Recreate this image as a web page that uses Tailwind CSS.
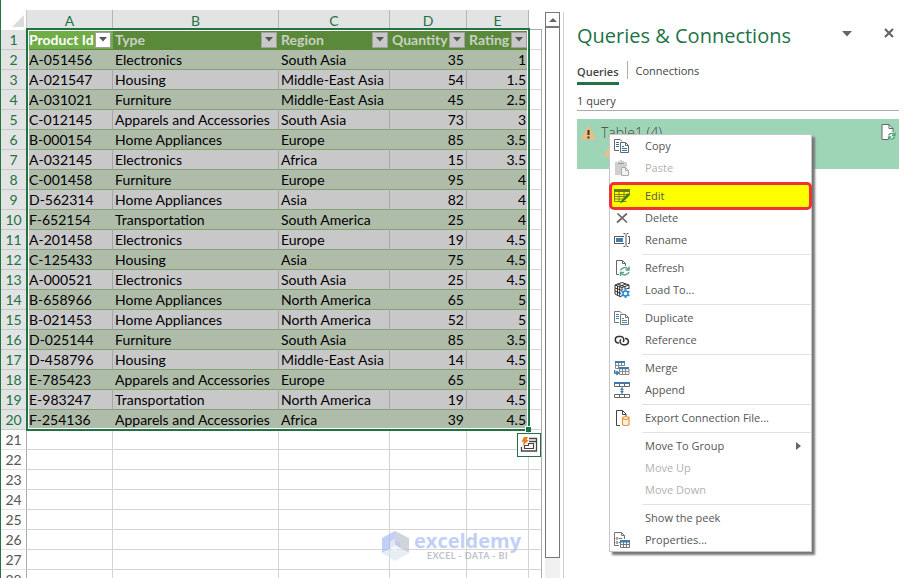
<!DOCTYPE html>
<html lang="en">
<head>
    <meta charset="UTF-8">
    <meta name="viewport" content="width=device-width, initial-scale=1.0">
    <title>Queries & Connections</title>
    <script src="https://cdn.jsdelivr.net/npm/@tailwindcss/browser@4"></script>
</head>
<body class="bg-white font-['Open_Sans',sans-serif]">
    <div class="flex h-screen overflow-hidden">

        <!-- Worksheet -->
        <main class="relative shrink-0 overflow-hidden border-l border-[#217346] pt-[10px] font-['Lato',sans-serif]">
            <table class="table-fixed w-[541px] border-separate border-spacing-0 text-[14px] leading-[19px] text-black">
                <colgroup>
                    <col class="w-[26px]"><col class="w-[86px]"><col class="w-[166px]"><col class="w-[111px]"><col class="w-[77px]"><col class="w-[62px]"><col class="w-[13px]">
                </colgroup>
                <thead>
                    <tr class="h-5 text-[#217346]">
                        <td class="border-r border-[#c6c6c6] p-0">
                            <svg class="ml-auto mr-[2px] mt-[2px]" width="12" height="12" viewBox="0 0 12 12"><path d="M12 0v12H0z" fill="#dcdcdc"/></svg>
                        </td>
                        <th class="border-r border-[#b5b5b5] bg-[#e1e4e2] p-0 font-normal">A</th>
                        <th class="border-r border-[#b5b5b5] bg-[#e1e4e2] p-0 font-normal">B</th>
                        <th class="border-r border-[#b5b5b5] bg-[#e1e4e2] p-0 font-normal">C</th>
                        <th class="border-r border-[#b5b5b5] bg-[#e1e4e2] p-0 font-normal">D</th>
                        <th class="border-r border-[#b5b5b5] bg-[#e1e4e2] p-0 font-normal">E</th>
                        <td class="border-b border-[#ababab] p-0"></td>
                    </tr>
                </thead>
                <tbody id="rows"></tbody>
            </table>

            <!-- Selection frame -->
            <div class="pointer-events-none absolute left-[25px] top-[28px] h-[403px] w-[504px] border-2 border-[#217346]">
                <div class="h-full border border-white"></div>
                <div class="absolute -bottom-[3px] -right-[3px] size-[6px] border-l border-t border-white bg-[#217346]"></div>
            </div>
            <button aria-label="Quick Analysis" class="absolute left-[516px] top-[433px] grid size-6 place-items-center border border-[#217346] bg-white">
                <svg width="18" height="18" viewBox="0 0 18 18" fill="none">
                    <path d="M9 2.500h7.500v12.500h-15V11M9 5.500h7" stroke="#444" stroke-width="1.300"/>
                    <path d="M4.500 12.500V9.500h4v-2h5v5z" stroke="#444" stroke-width="1.200"/>
                    <path d="M4 1h4L6.500 4H9L2.500 10l1.300-4.200H1.500z" fill="#ed7d1a"/>
                </svg>
            </button>

            <!-- Watermark -->
            <div class="pointer-events-none absolute left-[380px] top-[530px] flex items-center gap-1 opacity-70">
                <svg width="29" height="32" viewBox="0 0 29 32">
                    <path d="M14 1L1 8v15l8-4v-7l5-3z" fill="#a9bdf3"/>
                    <path d="M14 1l14 7v15l-9-5v-6l-5-3z" fill="#bdc4cf"/>
                    <path d="M1 23l13 8 14-8-9-5-5 3-5-2z" fill="#dbe8ef"/>
                    <path d="M14 9l-5 3v7l5-4z" fill="#d6dcec"/>
                    <path d="M14 9l5 3v6l-5-3z" fill="#a8b7e0"/>
                    <path d="M9 19l5-4 5 3-5 3z" fill="#eef2f8"/>
                </svg>
                <div class="text-center">
                    <div class="font-['Open_Sans',sans-serif] text-[20px] font-bold leading-[20px] text-[#a9bdf3]">exceldemy</div>
                    <div class="text-[9px] font-bold leading-[10px] tracking-wider text-[#a3a9b4]">EXCEL - DATA - BI</div>
                </div>
            </div>
        </main>

        <!-- Vertical scrollbar -->
        <div class="ml-[3px] mt-3 flex w-[15px] shrink-0 flex-col bg-[#f0f0f0]">
            <button aria-label="Scroll up" class="grid h-[15px] place-items-center border border-[#777] bg-white">
                <svg width="8" height="4" viewBox="0 0 8 4"><path d="M0 4l4-4 4 4z" fill="#666"/></svg>
            </button>
            <div class="mb-5 flex-1 border border-[#777] bg-white"></div>
        </div>

        <!-- Queries pane -->
        <aside class="relative ml-[3px] mt-3 min-w-0 flex-1 border-l border-[#d0d0d0] pl-[13px] pr-2 text-[#444]">
            <header class="flex items-start pt-[9px]">
                <h1 class="flex-1 whitespace-nowrap text-[20px] leading-[30px] text-[#217346]">Queries &amp; Connections</h1>
                <button aria-label="Pane options" class="mr-[32px] mt-[10px]">
                    <svg width="10" height="6" viewBox="0 0 10 6"><path d="M0 0h10L5 5.500z" fill="#666"/></svg>
                </button>
                <button aria-label="Close" class="mr-[5px] mt-[7px]">
                    <svg width="10" height="10" viewBox="0 0 10 10"><path d="M1 1l8 8M9 1L1 9" stroke="#666" stroke-width="2.200"/></svg>
                </button>
            </header>
            <nav class="mt-[10px] flex h-6 items-start text-[11px] leading-[20px]">
                <button class="h-6 border-b-3 border-[#217346] font-semibold">Queries</button>
                <span class="mx-2 h-[18px] w-px bg-[#ababab]"></span>
                <button>Connections</button>
            </nav>
            <p class="mt-[8px] border-b border-[#ababab] pb-[1px] text-[11px] leading-[16px]">1 query</p>
            <div class="mt-2 flex h-[50px] items-start bg-[#9fd5b7] pl-1 pr-[3px] pt-1">
                <svg class="mt-[3px] shrink-0" width="15" height="14" viewBox="0 0 15 14"><path d="M7.500 0.500L14.500 13H.5z" fill="#efbd80" stroke="#efbd80" stroke-linejoin="round"/><path d="M7.500 4v5M7.500 10.500v2" stroke="#333" stroke-width="2"/></svg>
                <div class="ml-[5px] flex-1">
                    <div class="text-[14px] font-light leading-[20px]">Table1 (4)</div>
                    <svg class="ml-[3px]" width="15" height="14" viewBox="0 0 15 14"><path d="M7.500 0.500L14.500 13H.5z" fill="#efbd80" stroke="#efbd80" stroke-linejoin="round"/></svg>
                </div>
                <svg class="mt-[1px]" width="15" height="17" viewBox="0 0 15 17" fill="none">
                    <path d="M1 .5h7l4 4V15.500H1z" fill="#fff"/>
                    <path d="M7 15.500H1V.5h7l4 4V8M8 .5v4h4" stroke="#666"/>
                    <path d="M7.500 11.500c1-2.500 4-2.500 5.500-1M14 8.500v3h-3M13.500 13c-1 2.500-4 2.500-5.500 1M7.500 16v-3h3" stroke="#57a37d" stroke-width="1.300"/>
                </svg>
            </div>

            <!-- Context menu -->
            <div role="menu" class="absolute left-[45px] top-[122px] w-[203px] border border-[#c6c6c6] bg-white text-[11px] text-[#555] shadow-[3px_3px_2px_#777]">
                <button role="menuitem" class="flex h-[22px] w-full items-center pl-1">
                    <svg class="mr-[15px]" width="16" height="16" viewBox="0 0 16 16" fill="none">
                        <path d="M5 12.500H.5V1.500H6L8 3.500M6.500 14.500v-10h5l3 3v7zM11.500 4.500v3h3" stroke="#666"/>
                        <path d="M2 4.500h3M2 6.500h3M2 8.500h3M8 8.500h2M8 10.500h5M8 12.500h5" stroke="#2e75a8"/>
                    </svg>Copy
                </button>
                <button role="menuitem" disabled class="flex h-[22px] w-full items-center pl-1 text-[#b1b1b1]">
                    <svg class="mr-[15px]" width="16" height="16" viewBox="0 0 16 16" fill="none">
                        <path d="M1 2h3V1h2V0h2v1h2v1h3v5H7v8H1z" fill="#d0d0d0"/><path d="M4 3.500h6" stroke="#999"/>
                        <path d="M7.500 7.500h4l3 3v5h-7zM11.500 7.500v3h3" fill="#f4f4f4" stroke="#aaa"/>
                    </svg>Paste
                </button>
                <button role="menuitem" class="relative -mx-px -mb-[3px] mt-[3px] flex h-7 w-[203px] items-center rounded-[5px] border-3 border-[#ee3338] bg-[#ffff00] pl-[2px]">
                    <svg class="mr-[15px]" width="16" height="16" viewBox="0 0 16 16" fill="none">
                        <path d="M0 1h16v3H0z" fill="#6d7a18"/>
                        <path d="M.5 4v9.500h12M.5 6.500h15M.5 8.500h12M.5 11h9M5 4v9.500M10 4v6M15.500 4v3" stroke="#7b861a"/>
                        <path d="M14 5l2 2-7 7-3 1.500 1.500-3z" fill="#3f7a1f"/>
                    </svg>Edit
                </button>
                <button role="menuitem" class="flex h-[22px] w-full items-center pl-1">
                    <svg class="mr-[15px]" width="16" height="16" viewBox="0 0 16 16"><path d="M3.500 3.500l9.500 9M13 3.500l-10 9" stroke="#666" stroke-width="1.700"/></svg>Delete
                </button>
                <button role="menuitem" class="flex h-[22px] w-full items-center pl-1">
                    <svg class="mr-[15px]" width="16" height="16" viewBox="0 0 16 16" fill="none">
                        <path d="M10 4.500H.5v7H10M14 4.500h1.500v7H14M9.500 1.500h1.500l1 1 1-1h1.500M12 2.500v11M9.500 14.500h1.500l1-1 1 1h1.500" stroke="#555"/>
                        <path d="M2 6h7v4H2z" fill="#3b7fae"/>
                    </svg>Rename
                </button>
                <hr class="mb-[2px] mt-[3px] ml-8 border-[#e1e1e1]">
                <button role="menuitem" class="flex h-[22px] w-full items-center pl-1">
                    <svg class="mr-[15px]" width="16" height="16" viewBox="0 0 16 16" fill="none">
                        <path d="M5 14.500H2.500V.5h6l3 3V6M8.500 .5v3h3" stroke="#666"/>
                        <path d="M6.500 10.500c1-3 5-4 7.500-1.500M15 6.500v3.500h-3.500M15 12c-1 3-5 4-7.500 1.500M6.500 16v-3.500H10" stroke="#5fa585" stroke-width="1.500"/>
                    </svg>Refresh
                </button>
                <button role="menuitem" class="flex h-[22px] w-full items-center pl-1">
                    <svg class="mr-[15px]" width="16" height="16" viewBox="0 0 16 16" fill="none">
                        <path d="M1 3l7-2.500L15 3 8 5.500zM1 3v9l6 3M15 3v4M8 5.500V15M1 6l7 2.500L15 6M1 9l6 2.500M3.500 4v9.500M5.700 5v9.500M3.500 2l7 2.500M12 2L5 4.500M11 4.500V8" stroke="#333"/>
                        <circle cx="11.500" cy="11.500" r="4.500" fill="#fff"/>
                        <circle cx="11.500" cy="11.500" r="2.500" stroke="#2a8dd4" stroke-width="1.500"/>
                        <path d="M11.500 7v2M11.500 14v2M7.500 9.200l2 1M13.500 12.700l2 1M7.500 13.800l2-1M13.500 10.300l2-1" stroke="#2a8dd4" stroke-width="1.800"/>
                    </svg>Load To...
                </button>
                <hr class="mb-[2px] mt-[3px] ml-8 border-[#e1e1e1]">
                <button role="menuitem" class="flex h-[22px] w-full items-center pl-1">
                    <svg class="mr-[15px]" width="16" height="16" viewBox="0 0 16 16" fill="none">
                        <path d="M5 12.500H.5V1.500H6L8 3.500M6.500 14.500v-10h5l3 3v7zM11.500 4.500v3h3" stroke="#777"/>
                        <path d="M2 4.500h3M2 6.500h3M2 8.500h3M8 8.500h2M8 10.500h5M8 12.500h5" stroke="#4c86b0"/>
                    </svg>Duplicate
                </button>
                <button role="menuitem" class="flex h-[22px] w-full items-center pl-1">
                    <svg class="mr-[15px]" width="16" height="16" viewBox="0 0 16 16" fill="none" stroke="#333" stroke-width="1.500">
                        <path d="M5 11H4a3.300 3.300 0 0 1 0-6.500h3a3.300 3.300 0 0 1 2 5.500"/>
                        <path d="M11 6.500h1a3.200 3.200 0 0 1 0 6.200H9a3.200 3.200 0 0 1-2-5.500"/>
                    </svg>Reference
                </button>
                <hr class="mb-[2px] mt-[3px] ml-8 border-[#e1e1e1]">
                <button role="menuitem" class="flex h-[22px] w-full items-center pl-1">
                    <svg class="mr-[15px]" width="16" height="16" viewBox="0 0 16 16" fill="none">
                        <path d="M1.500 3v5.500H5M1 5.500h10M4.500 3v5M7.500 3v3M10.500 3v3M5.500 9v5.500h9.500V9M5 11.500h10M8.500 9v5.500M11.500 9v5.500" stroke="#888"/>
                        <path d="M1 1h10v2H1zM5 7h10v2.200H5z" fill="#3b7fae"/>
                        <path d="M.7 10v3H4M2.500 11l2 2-2 2" stroke="#2e75a8" stroke-width="1.300"/>
                    </svg>Merge
                </button>
                <button role="menuitem" class="flex h-[22px] w-full items-center pl-1">
                    <svg class="mr-[15px]" width="16" height="16" viewBox="0 0 16 16" fill="none">
                        <path d="M.5 2v2.500h15V2M5.500 2v2.500M10.500 2v2.500M.5 12.500h15v3H.5zM5.500 12.500v3M10.500 12.500v3" stroke="#666"/>
                        <path d="M0 0h16v2H0z" fill="#3f74b5"/>
                        <path d="M7.200 5.500h1.600V7H10L8 9 6 7h1.200zM7.200 11.500h1.600V10H10L8 8l-2 2h1.200z" fill="#2e75a8"/>
                    </svg>Append
                </button>
                <hr class="mb-[2px] mt-[3px] ml-8 border-[#e1e1e1]">
                <button role="menuitem" class="flex h-[22px] w-full items-center pl-1">
                    <svg class="mr-[15px]" width="16" height="16" viewBox="0 0 16 16" fill="none">
                        <path d="M6 15.500H2.500V.5h6l3.500 3.500V6M8.500 .5v4H12" stroke="#444"/>
                        <path d="M8.500 8v6.500c0 1.300 6.500 1.300 6.500 0V8" fill="#fdf0e2" stroke="#ee9440" stroke-width="1.200"/>
                        <ellipse cx="11.750" cy="8" rx="3.250" ry="1.300" fill="#fff" stroke="#ee9440" stroke-width="1.200"/>
                    </svg>Export Connection File...
                </button>
                <hr class="mb-[2px] mt-[3px] ml-8 border-[#e1e1e1]">
                <button role="menuitem" class="flex h-[22px] w-full items-center justify-between pl-[35px] pr-[10px]">
                    Move To Group
                    <svg width="5" height="8" viewBox="0 0 5 8"><path d="M0 0l5 4-5 4z" fill="#666"/></svg>
                </button>
                <button role="menuitem" disabled class="flex h-[22px] w-full items-center pl-[35px] text-[#b1b1b1]">Move Up</button>
                <button role="menuitem" disabled class="flex h-[22px] w-full items-center pl-[35px] text-[#b1b1b1]">Move Down</button>
                <hr class="mb-[2px] mt-[3px] ml-8 border-[#e1e1e1]">
                <button role="menuitem" class="flex h-[22px] w-full items-center pl-[35px]">Show the peek</button>
                <button role="menuitem" class="flex h-[22px] w-full items-center pl-1">
                    <svg class="mr-[15px]" width="16" height="16" viewBox="0 0 16 16" fill="none">
                        <path d="M5 13.500H.5V.5h7l3 3V7M7.500 .5v3h3M5 6.500h3M5 10.500h1" stroke="#777"/>
                        <circle cx="3" cy="6.500" r="1" stroke="#777"/><circle cx="3" cy="10.500" r="1" stroke="#777"/>
                        <path d="M6.500 10v5.500h9V10M6.500 12.500h9M9.500 10v5.500M12.500 10v5.500" stroke="#777"/>
                        <path d="M6 8h10v2.500H6z" fill="#3b7fae"/>
                    </svg>Properties...
                </button>
            </div>
        </aside>
    </div>

    <script>
        const headers = ["Product Id", "Type", "Region", "Quantity", "Rating"];
        const data = [
            ["A-051456", "Electronics", "South Asia", 35, 1],
            ["A-021547", "Housing", "Middle-East Asia", 54, 1.5],
            ["A-031021", "Furniture", "Middle-East Asia", 45, 2.5],
            ["C-012145", "Apparels and Accessories", "South Asia", 73, 3],
            ["B-000154", "Home Appliances", "Europe", 85, 3.5],
            ["A-032145", "Electronics", "Africa", 15, 3.5],
            ["C-001458", "Furniture", "Europe", 95, 4],
            ["D-562314", "Home Appliances", "Asia", 82, 4],
            ["F-652154", "Transportation", "South America", 25, 4],
            ["A-201458", "Electronics", "Europe", 19, 4.5],
            ["C-125433", "Housing", "Asia", 75, 4.5],
            ["A-000521", "Electronics", "South Asia", 25, 4.5],
            ["B-658966", "Home Appliances", "North America", 65, 5],
            ["B-021453", "Home Appliances", "North America", 52, 5],
            ["D-025144", "Furniture", "South Asia", 85, 3.5],
            ["D-458796", "Housing", "Middle-East Asia", 14, 4.5],
            ["E-785423", "Apparels and Accessories", "Europe", 65, 5],
            ["E-983247", "Transportation", "North America", 19, 4.5],
            ["F-254136", "Apparels and Accessories", "Africa", 39, 4.5]
        ];

        const rowNumber = (n) => n <= 20
            ? `<th class="border-b border-r border-[#c6c9c7] bg-[#e1e4e2] p-0 font-normal text-[#217346]">${n}</th>`
            : `<th class="border-b border-b-[#e4e4e4] border-r border-r-[#ababab] p-0 font-normal text-[#555]">${n}</th>`;
        const edge = `<td class="border-b border-r border-b-[#d4d4d4] border-r-[#ababab] p-0"></td>`;

        let html = `<tr class="h-5">${rowNumber(1)}`;
        headers.forEach((name, i) => {
            const cell = i === 0 ? "bg-[#70ad47] text-white" : "bg-[#5a8a39] text-[#c8d0c4]";
            const arrow = i === 0 ? "bg-white" : "bg-[#c8c8c8]";
            html += `<td class="border-b border-[#5a8a39] p-0 pl-[2px] font-bold ${cell}">
                <div class="flex items-center justify-between whitespace-nowrap pr-[2px]">${name}
                    <button aria-label="Filter ${name}" class="grid size-4 shrink-0 place-items-center border border-[#a0a0a0] ${arrow}">
                        <svg width="8" height="5" viewBox="0 0 8 5"><path d="M0 0h8L4 4.500z" fill="#555"/></svg>
                    </button>
                </div></td>`;
        });
        html += edge + "</tr>";

        data.forEach((row, r) => {
            const fill = r % 2 === 0 ? "bg-[#b0bcaa] border-r-[#b0bcaa]" : "bg-[#c8c8c8] border-r-[#a6a6a6]";
            html += `<tr class="h-5">${rowNumber(r + 2)}`;
            row.forEach((value, i) => {
                const align = i < 3 ? "pl-[2px]" : "pr-[2px] text-right";
                html += `<td class="whitespace-nowrap border-b border-r border-b-[#84a372] p-0 ${align} ${fill}">${value}</td>`;
            });
            html += edge + "</tr>";
        });

        for (let n = 21; n <= 28; n++) {
            html += `<tr class="h-5">${rowNumber(n)}`;
            for (let i = 0; i < 5; i++) {
                html += `<td class="border-b border-r border-[#d4d4d4] p-0"></td>`;
            }
            html += edge + "</tr>";
        }
        document.getElementById("rows").innerHTML = html;
    </script>
</body>
</html>
